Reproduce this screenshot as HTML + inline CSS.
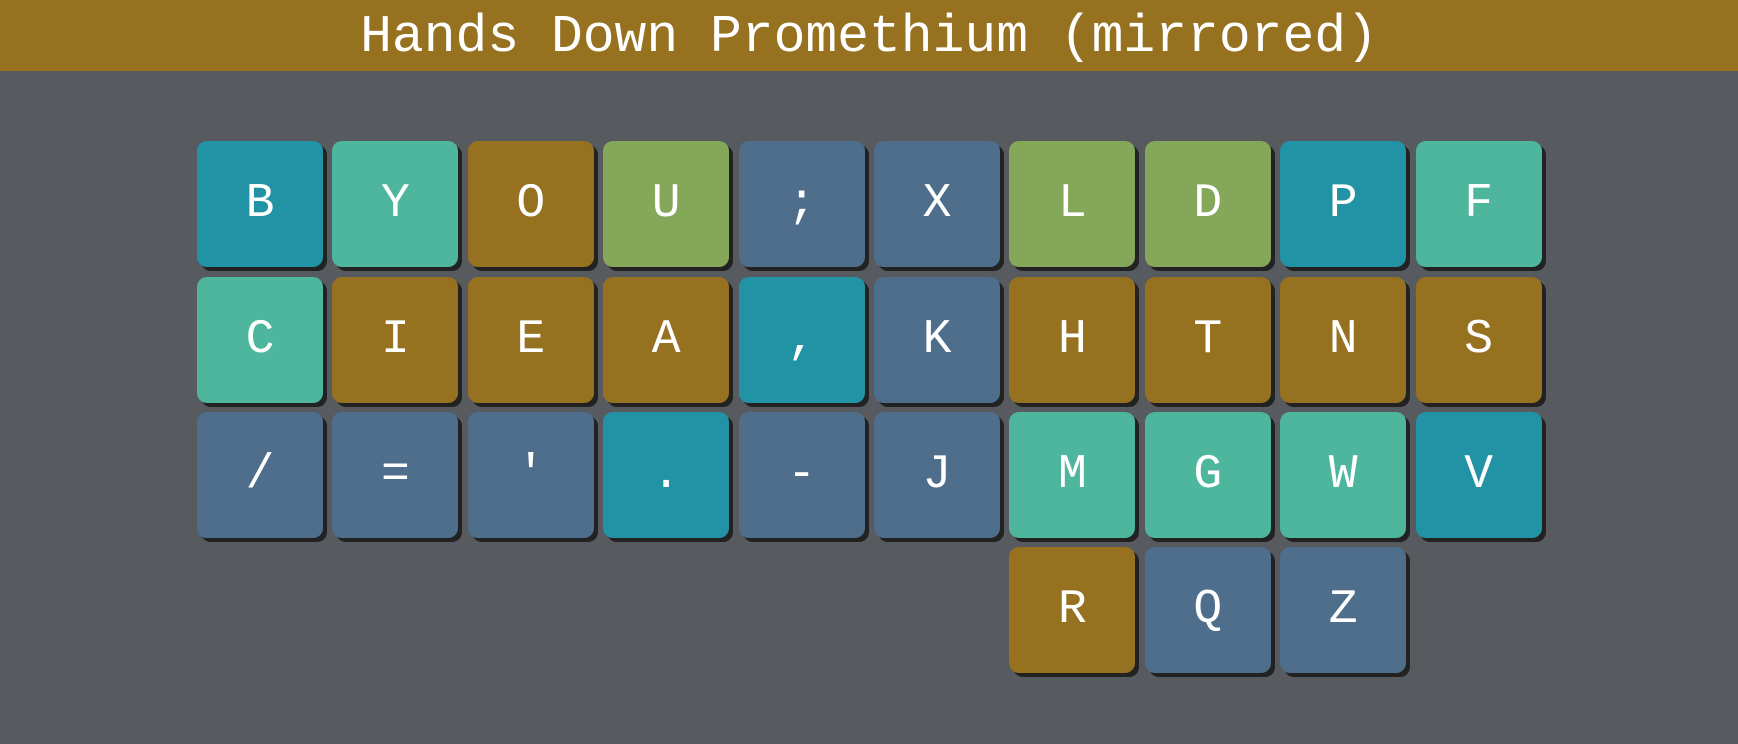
<!DOCTYPE html>
<html><head><style>
body{margin:0;width:1738px;height:744px;background:#575a5e;overflow:hidden;font-family:"Liberation Mono",monospace;}
.h{position:absolute;left:0;top:0;width:1738px;height:71px;background:#957120;color:#fff;font-size:53px;text-align:center;line-height:74px;}
.k{position:absolute;width:126px;height:126px;border-radius:10px;color:#fff;font-size:48px;display:flex;align-items:center;justify-content:center;box-shadow:4px 4px 0 #222;}
.a{background:#2293a5}.b{background:#4db69d}.c{background:#957120}.d{background:#84a75a}.e{background:#4e6e8c}
</style></head><body>
<div class="h">Hands Down Promethium (mirrored)</div>
<div id="g"></div>
<script>
var rows=[["aB","bY","cO","dU","e;","eX","dL","dD","aP","bF"],["bC","cI","cE","cA","a,","eK","cH","cT","cN","cS"],["e/","e=","e'","a.","e-","eJ","bM","bG","bW","aV"]];
var h="";
rows.forEach(function(r,j){r.forEach(function(s,i){h+='<div class="k '+s[0]+'" style="left:'+(197+135.4*i)+'px;top:'+(141+135.5*j)+'px">'+s.slice(1)+'</div>';});});
[["cR",6],["eQ",7],["eZ",8]].forEach(function(t){h+='<div class="k '+t[0][0]+'" style="left:'+(197+135.4*t[1])+'px;top:547px">'+t[0][1]+'</div>';});
document.getElementById("g").innerHTML=h;
</script>
</body></html>
